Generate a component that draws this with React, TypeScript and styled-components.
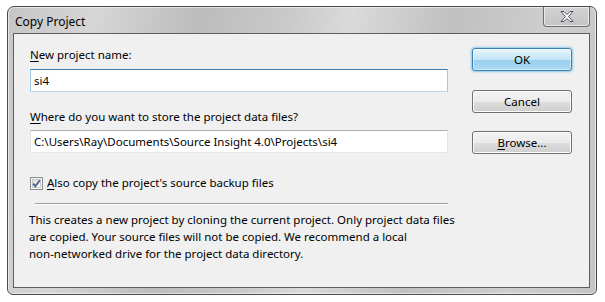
import React from 'react'
import styled, { createGlobalStyle } from 'styled-components'

const GlobalStyle = createGlobalStyle`
  body {
    margin: 0;
    background: #ffffff;
    font-family: 'Noto Sans', 'Liberation Sans', sans-serif;
  }
`

const Window = styled.div`
  margin: 6px 0 0 7px;
  width: 590px;
  height: 289px;
  box-sizing: border-box;
  border: 1px solid #4a4a4a;
  border-radius: 7px 7px 6px 6px;
  padding: 0 6px 6px 5px;
  display: flex;
  flex-direction: column;
  background: linear-gradient(
    100deg,
    #c6c6c6 0%,
    #d6d6d6 14%,
    #bcbcbc 30%,
    #c9c9c9 44%,
    #dadada 54%,
    #c0c0c0 70%,
    #cecece 86%,
    #c4c4c4 100%
  );
  box-shadow: inset 0 0 0 1px rgba(255, 255, 255, 0.55);
`

const TitleBar = styled.div`
  height: 26px;
  display: flex;
  align-items: flex-start;
  justify-content: space-between;
  flex-shrink: 0;
`

const Title = styled.span`
  margin: 7px 0 0 2px;
  font-size: 12px;
  line-height: 16px;
  color: #000;
`

const CloseButton = styled.div`
  width: 47px;
  height: 20px;
  box-sizing: border-box;
  border: 1px solid #6e6e6e;
  border-top: none;
  border-radius: 0 0 4px 4px;
  background: linear-gradient(#d2d2d2, #c4c4c4);
  box-shadow: inset 0 0 0 1px rgba(255, 255, 255, 0.6);
  display: flex;
  align-items: center;
  justify-content: center;
`

const Client = styled.div`
  flex: 1;
  border: 1px solid #5e5e5e;
  background: #f0f0f0;
  display: flex;
  padding: 13px 17px 0 16px;
  gap: 24px;
  font-size: 11.5px;
  color: #000;
`

const Form = styled.div`
  width: 418px;
  display: flex;
  flex-direction: column;
`

const Label = styled.div`
  line-height: 16px;
  height: 16px;
  margin-bottom: ${({ $gap }: { $gap: number }) => $gap}px;
`

const Key = styled.span`
  text-decoration: underline;
  text-underline-offset: 2px;
`

const TextBox = styled.div<{ $focused?: boolean }>`
  height: 23px;
  box-sizing: border-box;
  background: #fff;
  border: 1px solid ${({ $focused }) => ($focused ? '#a4c9e3' : '#e2e3ea')};
  border-top-color: ${({ $focused }) => ($focused ? '#3d7bad' : '#abadb3')};
  border-bottom-color: ${({ $focused }) => ($focused ? '#b7d9ed' : '#e3e9ef')};
  padding: 0 3px;
  line-height: 21px;
  margin-bottom: ${({ $gap }: { $gap?: number }) => $gap ?? 0}px;
`

const CheckRow = styled.label`
  display: flex;
  align-items: center;
  gap: 4px;
  height: 16px;
  line-height: 16px;
  margin-top: 22px;
`

const Box = styled.span`
  width: 13px;
  height: 13px;
  display: inline-flex;
`

const Separator = styled.div`
  height: 1px;
  background: #a0a0a0;
  border-bottom: 1px solid #ffffff;
  margin: 12px 0 0 5px;
`

const Note = styled.p`
  margin: 6px 0 0 -1px;
  line-height: 17px;
  white-space: nowrap;
`

const Buttons = styled.div`
  width: 101px;
  display: flex;
  flex-direction: column;
  padding-top: 1px;
`

const Button = styled.div<{ $primary?: boolean }>`
  height: 23px;
  box-sizing: border-box;
  border-radius: 3px;
  border: 1px solid ${({ $primary }) => ($primary ? '#3c7fb1' : '#707070')};
  background: ${({ $primary }) =>
    $primary
      ? 'linear-gradient(#e5f4fc 0%, #c4e5f6 50%, #98d1ef 51%, #a9d9f2 100%)'
      : 'linear-gradient(#f2f2f2 0%, #ebebeb 50%, #dddddd 51%, #cfcfcf 100%)'};
  box-shadow: inset 0 0 0 1px
      ${({ $primary }) => ($primary ? 'rgba(255,255,255,0.5)' : '#fcfcfc')}
    ${({ $primary }) => ($primary ? ', 0 0 2px 1px rgba(64, 170, 230, 0.55)' : '')};
  display: flex;
  align-items: center;
  justify-content: center;
  line-height: 16px;
  margin-bottom: ${({ $gap }: { $gap?: number }) => $gap ?? 0}px;
`

const CloseGlyph = () => (
  <svg width="16" height="13" viewBox="0 0 16 13">
    <path
      d="M2 1.5 L5 1.5 L8 4.5 L11 1.5 L14 1.5 L9.5 6.5 L14 11.5 L11 11.5 L8 8.5 L5 11.5 L2 11.5 L6.5 6.5 Z"
      fill="#ffffff"
      stroke="#4b4f5c"
      strokeWidth="1"
      strokeLinejoin="round"
    />
  </svg>
)

const CheckGlyph = () => (
  <svg width="13" height="13" viewBox="0 0 13 13">
    <defs>
      <linearGradient id="cb" x1="0" y1="0" x2="1" y2="1">
        <stop offset="0" stopColor="#dcdcdc" />
        <stop offset="1" stopColor="#fbfbfb" />
      </linearGradient>
    </defs>
    <rect x="0.5" y="0.5" width="12" height="12" fill="#f4f4f4" stroke="#8e8f8f" />
    <rect x="2.5" y="2.5" width="8" height="8" fill="url(#cb)" stroke="#b0b0b0" strokeWidth="0.6" />
    <path d="M3.2 6.6 L5.3 9.2 L9.8 3.2" fill="none" stroke="#4a5f97" strokeWidth="1.8" />
  </svg>
)

export default function App() {
  return (
    <>
      <GlobalStyle />
      <Window>
        <TitleBar>
          <Title>Copy Project</Title>
          <CloseButton>
            <CloseGlyph />
          </CloseButton>
        </TitleBar>
        <Client>
          <Form>
            <Label $gap={6}>
              <Key>N</Key>ew project name:
            </Label>
            <TextBox $focused $gap={17}>
              si4
            </TextBox>
            <Label $gap={5}>
              <Key>W</Key>here do you want to store the project data files?
            </Label>
            <TextBox>C:\Users\Ray\Documents\Source Insight 4.0\Projects\si4</TextBox>
            <CheckRow>
              <Box>
                <CheckGlyph />
              </Box>
              <span>
                <Key>A</Key>lso copy the project's source backup files
              </span>
            </CheckRow>
            <Separator />
            <Note>
              This creates a new project by cloning the current project. Only project data files
              <br />
              are copied. Your source files will not be copied. We recommend a local
              <br />
              non-networked drive for the project data directory.
            </Note>
          </Form>
          <Buttons>
            <Button $primary $gap={19}>
              OK
            </Button>
            <Button $gap={18}>Cancel</Button>
            <Button>
              <Key>B</Key>rowse...
            </Button>
          </Buttons>
        </Client>
      </Window>
    </>
  )
}
